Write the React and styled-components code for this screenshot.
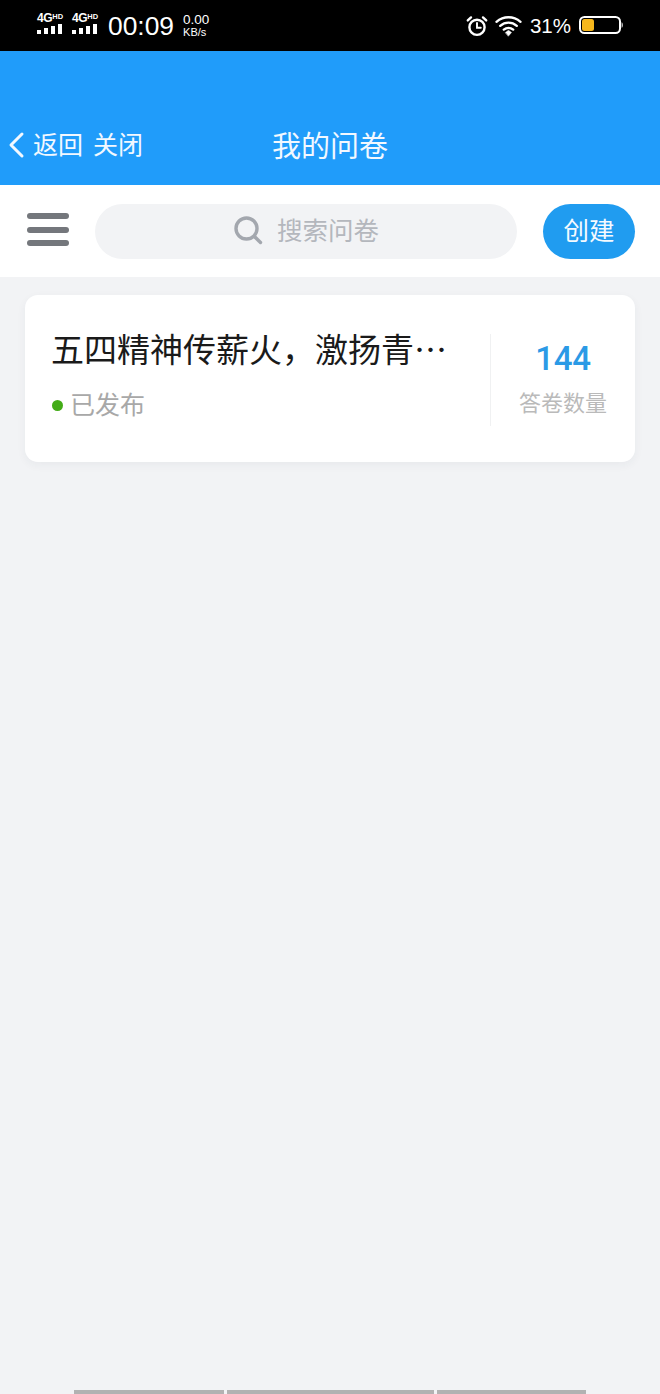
import React from "react";
import styled, { createGlobalStyle } from "styled-components";

const Global = createGlobalStyle`
  html, body { margin: 0; padding: 0; background: #f2f3f5; }
  body { font-family: "Liberation Sans", "Noto Sans CJK SC", sans-serif; }
`;

const Page = styled.div`
  width: 660px;
  height: 1394px;
  display: flex;
  flex-direction: column;
  background: #f2f3f5;
  overflow: hidden;
`;

const StatusBar = styled.div`
  height: 51px;
  flex: none;
  background: #000;
  color: #fff;
  display: flex;
  align-items: center;
  justify-content: space-between;
  padding: 0 36px 0 37px;
`;

const StatusGroup = styled.div`
  display: flex;
  align-items: center;
`;

const Signal = styled.div`
  width: 29px;
  margin-right: 6px;
  display: flex;
  flex-direction: column;
  gap: 1px;
  margin-top: -4px;
`;

const SignalLabel = styled.div`
  font-size: 12px;
  line-height: 10px;
  font-weight: 700;
  white-space: nowrap;
  letter-spacing: -0.4px;
  sup {
    font-size: 7.5px;
    line-height: 6px;
    vertical-align: 3px;
    letter-spacing: 0;
  }
`;

const SignalBars = styled.div`
  display: flex;
  align-items: flex-end;
  gap: 3px;
  height: 10px;
`;

const SignalBar = styled.span`
  width: 4px;
  height: ${(p) => p.$h}px;
  background: #fff;
`;

const Clock = styled.div`
  font-size: 26.4px;
  line-height: 30px;
  margin: 1px 9px 0 1px;
`;

const Speed = styled.div`
  font-size: 11px;
  line-height: 12px;
  text-align: left;
  margin-top: 1px;
  span {
    display: block;
    font-size: 13.5px;
    line-height: 12px;
  }
`;

const Percent = styled.div`
  font-size: 20.5px;
  margin: 0 8px 0 8px;
`;

const NavBar = styled.div`
  height: 134px;
  flex: none;
  background: #209cfa;
  color: #f2f8ff;
  position: relative;
  display: flex;
  align-items: flex-end;
  justify-content: center;
  padding-bottom: 20px;
  box-sizing: border-box;
`;

const NavLinks = styled.div`
  position: absolute;
  left: 8px;
  bottom: 25px;
  display: flex;
  align-items: center;
  font-size: 25px;
  line-height: 30px;
  svg { margin-right: 8px; }
`;

const NavLink = styled.span`
  margin-right: ${(p) => p.$gap || 0}px;
`;

const NavTitle = styled.div`
  font-size: 29px;
  line-height: 36px;
`;

const Toolbar = styled.div`
  height: 92px;
  flex: none;
  background: #fff;
  display: flex;
  align-items: center;
  padding: 1px 25px 0 27px;
  box-sizing: border-box;
`;

const Menu = styled.div`
  width: 42px;
  height: 33px;
  flex: none;
  display: flex;
  flex-direction: column;
  justify-content: space-between;
  margin-right: 26px;
  margin-bottom: 4px;
`;

const MenuLine = styled.span`
  height: 6px;
  border-radius: 3px;
  background: #74777c;
`;

const Search = styled.div`
  width: 422px;
  height: 55px;
  flex: none;
  border-radius: 28px;
  background: #f2f3f5;
  display: flex;
  align-items: center;
  justify-content: center;
  gap: 14px;
  color: #b4b7bd;
  font-size: 25.5px;
  margin-right: 26px;
  padding: 0 0 7px 0;
  box-sizing: border-box;
`;

const CreateButton = styled.div`
  width: 92px;
  height: 55px;
  flex: none;
  border-radius: 28px;
  background: #209cf0;
  color: #f4faff;
  font-size: 25.5px;
  padding-bottom: 7px;
  box-sizing: border-box;
  display: flex;
  align-items: center;
  justify-content: center;
`;

const Content = styled.div`
  flex: 1;
  padding: 18px 25px 0;
`;

const Card = styled.div`
  height: 167px;
  background: #fff;
  border-radius: 13px;
  box-shadow: 0 3px 10px rgba(40, 50, 70, 0.05);
  display: flex;
  align-items: center;
  padding: 0 27px;
  box-sizing: border-box;
`;

const CardMain = styled.div`
  width: 438px;
  flex: none;
  display: flex;
  flex-direction: column;
  gap: 20px;
  margin-top: -9px;
`;

const CardTitle = styled.div`
  font-family: "Noto Sans CJK SC", sans-serif;
  font-size: 33px;
  line-height: 42px;
  margin-left: -1px;
  color: #1a1a1a;
  white-space: nowrap;
`;

const Status = styled.div`
  display: flex;
  align-items: center;
  gap: 7px;
  font-size: 25px;
  line-height: 32px;
  color: #a8a8a8;
`;

const Dot = styled.span`
  width: 11px;
  height: 11px;
  border-radius: 50%;
  background: #43ac17;
`;

const CardStats = styled.div`
  flex: 1;
  height: 92px;
  margin-right: -27px;
  margin-top: 3px;
  border-left: 1px solid #f0f1f2;
  display: flex;
  flex-direction: column;
  align-items: center;
  box-sizing: border-box;
`;

const StatValue = styled.div`
  font-family: Roboto, "Liberation Sans", sans-serif;
  font-size: 33px;
  line-height: 40px;
  letter-spacing: -0.3px;
  margin-top: 5px;
  font-weight: 500;
  color: #2b9ae6;
`;

const StatLabel = styled.div`
  font-size: 22px;
  line-height: 30px;
  margin-top: 10px;
  color: #bababa;
`;

const HomeBars = styled.div`
  height: 4px;
  flex: none;
  display: flex;
  gap: 3px;
  padding-left: 74px;
`;

const HomeBar = styled.span`
  width: ${(p) => p.$w}px;
  background: #b2b2b2;
`;

const AlarmIcon = () => (
  <svg width="22" height="22" viewBox="0 0 22 22" fill="none" stroke="#fff" strokeLinecap="round">
    <circle cx="11" cy="12.3" r="7.6" strokeWidth="2.4" />
    <path d="M11 8v4.800h3.800" strokeWidth="1.900" />
    <path d="M1.800 5.400 5 2.400M20.200 5.400 17 2.400" strokeWidth="2.400" />
  </svg>
);

const WifiIcon = () => (
  <svg width="27" height="22" viewBox="0 0 27 22" fill="none" stroke="#fff" strokeWidth="2.4" strokeLinecap="round" style={{ marginLeft: 7 }}>
    <path d="M1.500 6.800C8.500.8 18.500.8 25.500 6.800" />
    <path d="M5.200 10.800C10.200 6.600 16.800 6.600 21.800 10.800" />
    <path d="M8.800 14.600C11.500 12.500 15.500 12.500 18.200 14.600" />
    <path d="M10.500 17.500 13.500 15.200 16.500 17.500 13.500 21Z" fill="#fff" strokeWidth="0.5" />
  </svg>
);

const BatteryIcon = () => (
  <svg width="45" height="20" viewBox="0 0 45 20" fill="none" style={{ marginTop: -1 }}>
    <rect x="1" y="2" width="40" height="16" rx="4.500" stroke="#fff" strokeWidth="2" />
    <rect x="3" y="4" width="12" height="12" rx="2.500" fill="#f6b71c" />
    <path d="M42.600 7.200c1.500.3 1.500 5.300 0 5.600z" fill="#fff" />
  </svg>
);

const BackIcon = () => (
  <svg width="17" height="28" viewBox="0 0 17 28" fill="none" stroke="#f2f8ff" strokeWidth="3" strokeLinecap="round" strokeLinejoin="round">
    <path d="M14 3 3 14l11 11" />
  </svg>
);

const SearchIcon = () => (
  <svg width="30" height="30" viewBox="0 0 30 30" fill="none" stroke="#a3a7ae" strokeLinecap="round" style={{ marginTop: 4 }}>
    <circle cx="13.500" cy="13.500" r="10.500" strokeWidth="3.400" />
    <path d="m22 22 5.500 5.500" strokeWidth="3.400" />
  </svg>
);

const signalHeights = [4, 6, 8, 10];

export default function App() {
  return (
    <Page>
      <Global />
      <StatusBar>
        <StatusGroup>
          {[0, 1].map((i) => (
            <Signal key={i}>
              <SignalLabel>4G<sup>HD</sup></SignalLabel>
              <SignalBars>
                {signalHeights.map((h) => (
                  <SignalBar key={h} $h={h} />
                ))}
              </SignalBars>
            </Signal>
          ))}
          <Clock>00:09</Clock>
          <Speed>
            <span>0.00</span>
            KB/s
          </Speed>
        </StatusGroup>
        <StatusGroup>
          <AlarmIcon />
          <WifiIcon />
          <Percent>31%</Percent>
          <BatteryIcon />
        </StatusGroup>
      </StatusBar>
      <NavBar>
        <NavLinks>
          <BackIcon />
          <NavLink $gap={10}>返回</NavLink>
          <NavLink>关闭</NavLink>
        </NavLinks>
        <NavTitle>我的问卷</NavTitle>
      </NavBar>
      <Toolbar>
        <Menu>
          <MenuLine />
          <MenuLine />
          <MenuLine />
        </Menu>
        <Search>
          <SearchIcon />
          搜索问卷
        </Search>
        <CreateButton>创建</CreateButton>
      </Toolbar>
      <Content>
        <Card>
          <CardMain>
            <CardTitle>五四精神传薪火，激扬青…</CardTitle>
            <Status>
              <Dot />
              已发布
            </Status>
          </CardMain>
          <CardStats>
            <StatValue>144</StatValue>
            <StatLabel>答卷数量</StatLabel>
          </CardStats>
        </Card>
      </Content>
      <HomeBars>
        <HomeBar $w={150} />
        <HomeBar $w={207} />
        <HomeBar $w={149} />
      </HomeBars>
    </Page>
  );
}
